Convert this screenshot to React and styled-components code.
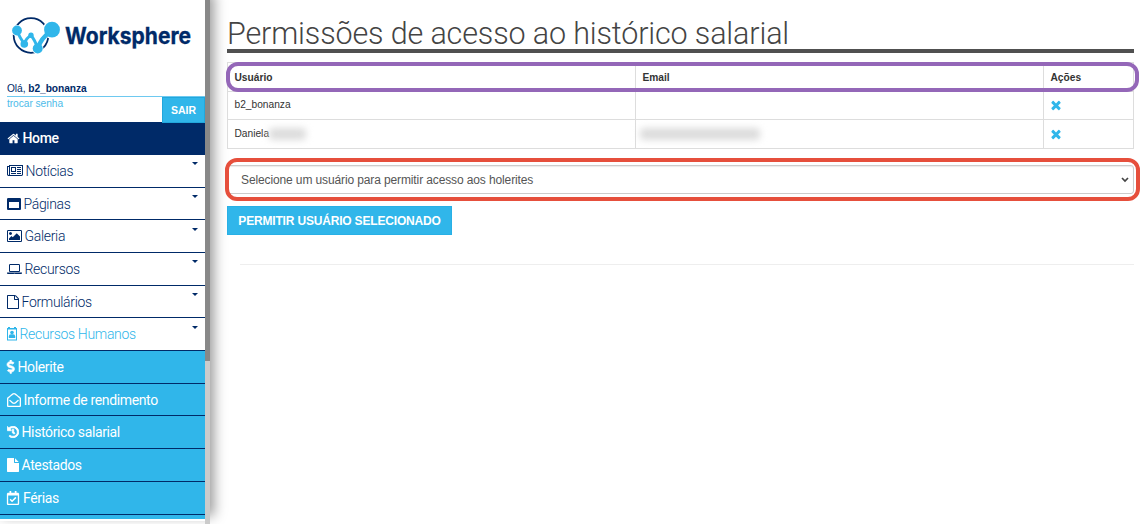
import styled, { createGlobalStyle } from "styled-components";
import {
  FaDollarSign,
  FaRegEnvelopeOpen,
  FaHistory,
  FaRegCalendarCheck,
} from "react-icons/fa";

const GlobalStyle = createGlobalStyle`
  body {
    margin: 0;
    background-color: #fff;
    overflow: hidden;
    font-family: "Liberation Sans", Arial, sans-serif;
    color: #333;
  }
`;
const Page = styled.div`
  display: flex;
  align-items: flex-start;
  width: 1146px;
  height: 524px;
`;
const Sidebar = styled.aside`
  display: flex;
  flex-shrink: 0;
  width: 210px;
  height: 521px;
  background-color: #fff;
  box-shadow: 3px -6px 12px 1px rgba(0, 0, 0, 0.4);
`;
const SidebarContent = styled.div`
  width: 205px;
  height: 519px;
  overflow: hidden;
`;
const ScrollTrack = styled.div`
  width: 5px;
  height: 524px;
  background-color: #cbcbcb;
`;
const ScrollThumb = styled.div`
  height: 361px;
  background-color: #888;
`;
const LogoBox = styled.div`
  height: 82px;
`;
const UserBox = styled.div`
  height: 40.3px;
  padding-left: 7px;
  font-size: 10.2px;
  letter-spacing: -0.05px;
  line-height: 14px;
  color: #002a68;
`;
const Greeting = styled.div`
  height: 14px;
  border-bottom: 1px solid #6ec9f0;
`;
const UserActions = styled.div`
  display: flex;
  justify-content: space-between;
  color: #4dbbe9;
`;
const ExitButton = styled.button`
  width: 43px;
  height: 26px;
  padding: 0;
  border: 1px solid #22a7dc;
  background-color: #30b6ea;
  color: #fff;
  font: bold 10.5px "Liberation Sans", Arial, sans-serif;
`;
const MenuItem = styled.div`
  display: flex;
  align-items: center;
  box-sizing: border-box;
  height: 32.7px;
  padding: 0 7px 0 6.5px;
  border-bottom: 1px solid #002a68;
  background-color: ${(p) =>
    p.$kind === "active" ? "#002a68" : p.$kind === "sub" ? "#30b6ea" : "#fff"};
  color: ${(p) =>
    p.$kind === "active" || p.$kind === "sub"
      ? "#fff"
      : p.$kind === "open"
        ? "#30b6ea"
        : "#002a68"};
  font-family: Roboto, sans-serif;
  font-size: 14px;
  font-weight: ${(p) =>
    p.$kind === "active" ? 500 : p.$kind === "sub" ? 400 : 300};
  letter-spacing: ${(p) => (p.$kind === "sub" ? "-0.37px" : "-0.32px")};
  white-space: nowrap;

  svg {
    flex-shrink: 0;
    margin-right: 3px;
  }
`;
const DollarIcon = styled(FaDollarSign)`
  && {
    margin: 0 0.3px 0 -2.8px;
  }
`;
const CalendarIcon = styled(FaRegCalendarCheck)`
  margin-left: -0.5px;
`;
const Caret = styled.span`
  margin: -14px 0 0 auto;
  border-top: 3.5px solid #002a68;
  border-left: 3.5px solid transparent;
  border-right: 3.5px solid transparent;
`;
const Main = styled.main`
  flex: 1;
  padding: 15px 12px 0 17px;
`;
const Title = styled.h1`
  width: 907px;
  height: 33px;
  margin: 0 0 9px;
  padding-top: 1px;
  border-bottom: 4px solid #505050;
  font-family: Roboto, sans-serif;
  font-size: 30.5px;
  font-weight: 300;
  letter-spacing: -0.14px;
  line-height: 36px;
  color: #444;
  white-space: nowrap;
`;
const TableArea = styled.div`
  position: relative;
  width: 908px;
  height: 87px;
`;
const Table = styled.table`
  width: 907px;
  height: 87px;
  table-layout: fixed;
  border-collapse: collapse;
  font-size: 10.2px;
  line-height: 14px;
`;
const Cell = styled.td`
  height: 28px;
  padding: 0 7px 0 6.5px;
  box-sizing: border-box;
  border: 1px solid #ddd;
  text-align: left;
  white-space: nowrap;
`;
const HeadCell = styled(Cell)`
  padding-top: 2px;
`;
const RemoveButton = styled.button`
  display: block;
  margin-left: -2px;
  padding: 0;
  border: none;
  background: none;
  color: #30b6ea;

  svg {
    display: block;
  }
`;
const Highlight = styled.div`
  position: absolute;
  top: ${(p) => p.$top}px;
  left: ${(p) => p.$left}px;
  right: ${(p) => p.$right}px;
  height: ${(p) => p.$height}px;
  box-sizing: border-box;
  border: 4px solid ${(p) => p.$color};
  border-radius: 12px;
  pointer-events: none;
`;
const Hidden = styled.span`
  display: inline-block;
  width: ${(p) => p.$width}px;
  height: 12px;
  margin-left: ${(p) => p.$shift || 0}px;
  vertical-align: middle;
  border-radius: 4px;
  background-color: #dcdcdc;
  filter: blur(3.5px);
`;
const SelectArea = styled.div`
  position: relative;
  width: 908px;
  margin-top: 16px;
`;
const Select = styled.div`
  display: flex;
  align-items: center;
  justify-content: space-between;
  box-sizing: border-box;
  width: 907px;
  height: 29px;
  padding: 0 4px 0 13px;
  border: 1px solid #ccc;
  border-radius: 3px;
  box-shadow: inset 0 1px 1px rgba(0, 0, 0, 0.08);
  font-size: 12px;
  letter-spacing: -0.12px;
  color: #555;
`;
const AllowButton = styled.button`
  display: block;
  width: 225px;
  height: 29px;
  margin-top: 12px;
  padding: 0;
  border: 1px solid #28b0e6;
  background-color: #30b6ea;
  color: #fff;
  font: bold 12px "Liberation Sans", Arial, sans-serif;
  letter-spacing: -0.18px;
  white-space: nowrap;
`;
const Divider = styled.div`
  margin: 29px 0 0 13px;
  width: 894px;
  border-top: 1px solid #eee;
`;

const paths = {
  home: [
    1792,
    "M1472 992v480q0 26-19 45t-45 19h-384v-384h-256v384h-384q-26 0-45-19t-19-45v-480q0-1 .5-3t.5-3l575-474 575 474q1 2 1 6zm223-69l-62 74q-8 9-21 11h-3q-13 0-21-7l-692-577-692 577q-12 8-24 7-13-2-21-11l-62-74q-8-10-7-23.5t11-21.5l719-599q32-26 76-26t76 26l244 204v-195q0-14 9-23t23-9h192q14 0 23 9t9 23v408l219 182q10 8 11 21.5t-7 23.5z",
  ],
  news: [
    2048,
    "M1024 512h-384v384h384v-384zm128 640v128h-640v-128h640zm0-768v640h-640v-640h640zm640 768v128h-512v-128h512zm0-256v128h-512v-128h512zm0-256v128h-512v-128h512zm0-256v128h-512v-128h512zm-1536 960v-960h-128v960q0 26 19 45t45 19 45-19 19-45zm1664 0v-1088h-1536v1088q0 33-11 64h1483q26 0 45-19t19-45zm128-1216v1216q0 80-56 136t-136 56h-1664q-80 0-136-56t-56-136v-1088h256v-128h1792z",
  ],
  page: [
    1792,
    "M256 1408h1280v-768h-1280v768zm1536-1120v1216q0 66-47 113t-113 47h-1472q-66 0-113-47t-47-113v-1216q0-66 47-113t113-47h1472q66 0 113 47t47 113z",
  ],
  picture: [
    1920,
    "M640 576q0 80-56 136t-136 56-136-56-56-136 56-136 136-56 136 56 56 136zm1024 384v448h-1408v-192l320-320 160 160 512-512zm96-704h-1600q-13 0-22.5 9.5t-9.5 22.5v1216q0 13 9.5 22.5t22.5 9.5h1600q13 0 22.5-9.5t9.5-22.5v-1216q0-13-9.5-22.5t-22.5-9.5zm160 32v1216q0 66-47 113t-113 47h-1600q-66 0-113-47t-47-113v-1216q0-66 47-113t113-47h1600q66 0 113 47t47 113z",
  ],
  laptop: [
    1920,
    "M416 1280q-66 0-113-47t-47-113v-704q0-66 47-113t113-47h1088q66 0 113 47t47 113v704q0 66-47 113t-113 47h-1088zm-32-864v704q0 13 9.5 22.5t22.5 9.5h1088q13 0 22.5-9.5t9.5-22.5v-704q0-13-9.5-22.5t-22.5-9.5h-1088q-13 0-22.5 9.5t-9.5 22.5zm1376 928h160v96q0 40-47 68t-113 28h-1600q-66 0-113-28t-47-68v-96h1760zm-720 96q16 0 16-16t-16-16h-160q-16 0-16 16t16 16h160z",
  ],
  file: [
    1536,
    "M1468 380q28 28 48 76t20 88v1152q0 40-28 68t-68 28h-1344q-40 0-68-28t-28-68v-1600q0-40 28-68t68-28h896q40 0 88 20t76 48zm-444-244v376h376q-10-29-22-41l-313-313q-12-12-41-22zm384 1528v-1024h-416q-40 0-68-28t-28-68v-416h-768v1536h1280z",
  ],
  fileSolid: [
    1536,
    "M1024 512V40q22 14 36 28l408 408q14 14 28 36zm-128 32q0 40 28 68t68 28h544v1056q0 40-28 68t-68 28h-1344q-40 0-68-28t-28-68v-1600q0-40 28-68t68-28h800v544z",
  ],
  times: [
    1792,
    "M1490 1322q0 40-28 68l-136 136q-28 28-68 28t-68-28l-294-294-294 294q-28 28-68 28t-68-28l-136-136q-28-28-28-68t28-68l294-294-294-294q-28-28-28-68t28-68l136-136q28-28 68-28t68 28l294 294 294-294q28-28 68-28t68 28l136 136q28 28 28 68t-28 68l-294 294 294 294q28 28 28 68z",
  ],
};

const Icon = ({ name, size = 14 }) => {
  const [width, d] = paths[name];
  return (
    <svg
      width={(width / 1792) * size}
      height={size}
      viewBox={`0 0 ${width} 1792`}
      fill="currentColor"
    >
      <path d={d} />
    </svg>
  );
};

const BadgeIcon = () => (
  <svg width="10" height="14" viewBox="0 0 10 14" fill="currentColor">
    <path
      fillRule="evenodd"
      d="M0 1h1V0h2v1h4V0h2v1h1v12.500H0zM1 2.500v10h8v-10z"
    />
    <circle cx="5" cy="5.500" r="1.800" />
    <path d="M1.800 11V9.500Q1.800 7.300 4 7.300h2q2.200 0 2.200 2.200V11z" />
  </svg>
);

const Logo = () => (
  <svg width="205" height="82" viewBox="0 0 205 82">
    <circle cx="31" cy="35.500" r="17.300" fill="none" stroke="#002a68" strokeWidth="1.800" />
    <g fill="#fff">
      <circle cx="17" cy="30.500" r="5.600" />
      <circle cx="37.700" cy="48.500" r="5.800" />
      <circle cx="52" cy="29.700" r="9.300" />
    </g>
    <g fill="none" stroke="#30b6ea" strokeLinecap="round">
      <path d="M17 31Q20 38 24.300 44Q26 38 31 35.500Q35 40 37.700 48.500" strokeWidth="3" />
      <path d="M37.700 48.500Q41 38 51 31" strokeWidth="4.500" />
    </g>
    <g fill="#30b6ea">
      <circle cx="17" cy="30.500" r="4.900" />
      <circle cx="24.300" cy="44" r="3.800" />
      <circle cx="31" cy="35.300" r="2.700" />
      <circle cx="37.700" cy="48.500" r="5" />
      <circle cx="52" cy="29.700" r="7.900" />
    </g>
    <text
      x="65"
      y="44"
      textLength="126"
      lengthAdjust="spacingAndGlyphs"
      fill="#002a68"
      stroke="#002a68"
      strokeWidth="0.300"
      fontFamily="Inter, sans-serif"
      fontWeight="700"
      fontSize="22.5"
    >
      Worksphere
    </text>
  </svg>
);

const menu = [
  { label: "Home", icon: <Icon name="home" size={13} />, kind: "active" },
  { label: "Notícias", icon: <Icon name="news" /> },
  { label: "Páginas", icon: <Icon name="page" /> },
  { label: "Galeria", icon: <Icon name="picture" /> },
  { label: "Recursos", icon: <Icon name="laptop" /> },
  { label: "Formulários", icon: <Icon name="file" /> },
  { label: "Recursos Humanos", icon: <BadgeIcon />, kind: "open" },
  {
    label: "Holerite",
    icon: <DollarIcon size={13.5} stroke="#fff" strokeWidth="22" />,
    kind: "sub",
  },
  { label: "Informe de rendimento", icon: <FaRegEnvelopeOpen size={14} />, kind: "sub" },
  {
    label: "Histórico salarial",
    icon: <FaHistory size={12} stroke="#fff" strokeWidth="32" />,
    kind: "sub",
  },
  { label: "Atestados", icon: <Icon name="fileSolid" />, kind: "sub" },
  { label: "Férias", icon: <CalendarIcon size={14} />, kind: "sub" },
  { label: "", icon: null, kind: "sub" },
];

const App = () => {
  return (
    <Page>
      <GlobalStyle />
      <Sidebar>
        <SidebarContent>
          <LogoBox>
            <Logo />
          </LogoBox>
          <UserBox>
            <Greeting>
              Olá, <b>b2_bonanza</b>
            </Greeting>
            <UserActions>
              trocar senha
              <ExitButton>SAIR</ExitButton>
            </UserActions>
          </UserBox>
          {menu.map(({ label, icon, kind }) => (
            <MenuItem key={label} $kind={kind}>
              {icon}
              {label}
              {(!kind || kind === "open") && <Caret />}
            </MenuItem>
          ))}
        </SidebarContent>
        <ScrollTrack>
          <ScrollThumb />
        </ScrollTrack>
      </Sidebar>
      <Main>
        <Title>Permissões de acesso ao histórico salarial</Title>
        <TableArea>
          <Table>
            <colgroup>
              <col width="408" />
              <col width="408" />
              <col />
            </colgroup>
            <tbody>
              <tr>
                <HeadCell as="th">Usuário</HeadCell>
                <HeadCell as="th">Email</HeadCell>
                <HeadCell as="th">Ações</HeadCell>
              </tr>
              <tr>
                <Cell>b2_bonanza</Cell>
                <Cell />
                <Cell>
                  <RemoveButton>
                    <Icon name="times" />
                  </RemoveButton>
                </Cell>
              </tr>
              <tr>
                <Cell>
                  Daniela
                  <Hidden $width={37} />
                </Cell>
                <Cell>
                  <Hidden $width={120} $shift={-3} />
                </Cell>
                <Cell>
                  <RemoveButton>
                    <Icon name="times" />
                  </RemoveButton>
                </Cell>
              </tr>
            </tbody>
          </Table>
          <Highlight $top={0} $left={-1} $right={-4} $height={30} $color="#9467b8" />
        </TableArea>
        <SelectArea>
          <Select>
            Selecione um usuário para permitir acesso aos holerites
            <svg width="8" height="6" viewBox="0 0 8 6">
              <path d="M1 1l3 3 3-3" fill="none" stroke="#444" strokeWidth="1.700" />
            </svg>
          </Select>
          <Highlight $top={-7} $left={-2} $right={-5} $height={43} $color="#e64f3c" />
        </SelectArea>
        <AllowButton>PERMITIR USUÁRIO SELECIONADO</AllowButton>
        <Divider />
      </Main>
    </Page>
  );
};

export default App;
